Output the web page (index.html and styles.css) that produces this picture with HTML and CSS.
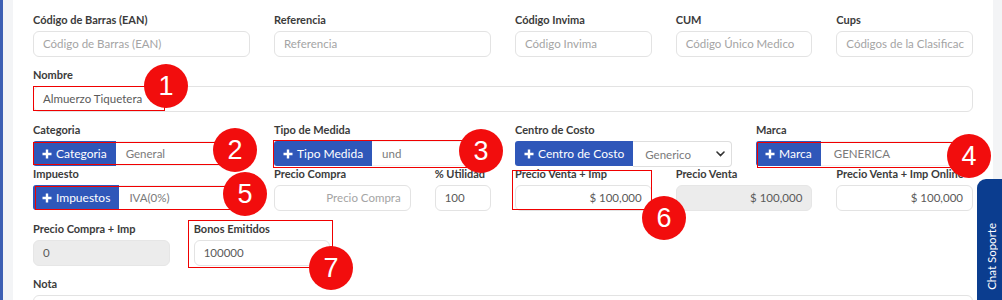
FILE: index.html
```html
<!DOCTYPE html>
<html lang="es">
<head>
<meta charset="utf-8">
<link rel="stylesheet" href="styles.css">
</head>
<body>
<div class="page">
  <div class="card">
    <div class="grid">
      <div class="field c3"><div class="lbl">Código de Barras (EAN)</div><div class="inp ph">Código de Barras (EAN)</div></div>
      <div class="field c3"><div class="lbl">Referencia</div><div class="inp ph">Referencia</div></div>
      <div class="field c2"><div class="lbl">Código Invima</div><div class="inp ph">Código Invima</div></div>
      <div class="field c2"><div class="lbl">CUM</div><div class="inp ph">Código Único Medico</div></div>
      <div class="field c2"><div class="lbl">Cups</div><div class="inp ph">Códigos de la Clasificac</div></div>

      <div class="field c12"><div class="lbl">Nombre</div><div class="inp val">Almuerzo Tiquetera</div></div>

      <div class="field c3 tight"><div class="lbl">Categoria</div>
        <div class="group"><div class="btn"><svg class="plus" width="10" height="10" viewBox="0 0 10 10"><path d="M5 0.5v9M0.5 5h9" stroke="#fff" stroke-width="2.4"/></svg>Categoria</div><div class="gin">General</div></div></div>
      <div class="field c3 tight"><div class="lbl">Tipo de Medida</div>
        <div class="group"><div class="btn"><svg class="plus" width="10" height="10" viewBox="0 0 10 10"><path d="M5 0.5v9M0.5 5h9" stroke="#fff" stroke-width="2.4"/></svg>Tipo Medida</div><div class="gin">und</div></div></div>
      <div class="field c3 tight"><div class="lbl">Centro de Costo</div>
        <div class="group"><div class="btn"><svg class="plus" width="10" height="10" viewBox="0 0 10 10"><path d="M5 0.5v9M0.5 5h9" stroke="#fff" stroke-width="2.4"/></svg>Centro de Costo</div><div class="gin sel">Generico<svg class="chev" width="9" height="6" viewBox="0 0 9 6"><path d="M1 1l3.5 3.5L8 1" fill="none" stroke="#333" stroke-width="1.6" stroke-linecap="round"/></svg></div></div></div>
      <div class="field c3 tight"><div class="lbl">Marca</div>
        <div class="group"><div class="btn"><svg class="plus" width="10" height="10" viewBox="0 0 10 10"><path d="M5 0.5v9M0.5 5h9" stroke="#fff" stroke-width="2.4"/></svg>Marca</div><div class="gin caps">GENERICA</div></div></div>

      <div class="field c3"><div class="lbl">Impuesto</div>
        <div class="group"><div class="btn"><svg class="plus" width="10" height="10" viewBox="0 0 10 10"><path d="M5 0.5v9M0.5 5h9" stroke="#fff" stroke-width="2.4"/></svg>Impuestos</div><div class="gin">IVA(0%)</div></div></div>
      <div class="field c2"><div class="lbl">Precio Compra</div><div class="inp ph right">Precio Compra</div></div>
      <div class="field c1"><div class="lbl">% Utilidad</div><div class="inp val">100</div></div>
      <div class="field c2"><div class="lbl">Precio Venta + Imp</div><div class="inp val right">$ 100,000</div></div>
      <div class="field c2"><div class="lbl">Precio Venta</div><div class="inp val right dis">$ 100,000</div></div>
      <div class="field c2"><div class="lbl">Precio Venta + Imp Online</div><div class="inp val right">$ 100,000</div></div>

      <div class="field c2"><div class="lbl">Precio Compra + Imp</div><div class="inp val dis">0</div></div>
      <div class="field c2"><div class="lbl">Bonos Emitidos</div><div class="inp val">100000</div></div>
      <div class="field c8"></div>

      <div class="field c12"><div class="lbl">Nota</div><div class="inp"></div></div>
    </div>
  </div>

  <div class="chat"><span>Chat Soporte</span></div>

  <div class="box b1"></div>
  <div class="box b2"></div>
  <div class="box b3"></div>
  <div class="box b4"></div>
  <div class="box b5"></div>
  <div class="box b6"></div>
  <div class="box b7"></div>

  <div class="num n1">1</div>
  <div class="num n2">2</div>
  <div class="num n3">3</div>
  <div class="num n4">4</div>
  <div class="num n5">5</div>
  <div class="num n6">6</div>
  <div class="num n7">7</div>
</div>
</body>
</html>
```

FILE: styles.css
```css
* { box-sizing: border-box; }
html, body { margin: 0; padding: 0; }
body {
  width: 1002px;
  height: 300px;
  overflow: hidden;
  font-family: "Lato", "Open Sans", sans-serif;
  background: #f3f4f6;
}
.page {
  position: relative;
  width: 1002px;
  height: 300px;
  border-left: 3px solid #3d5fb3;
  padding: 0 9px 0 10px;
  overflow: hidden;
}
.card {
  background: #ffffff;
  height: 300px;
  padding: 13px 20px 0 20px;
}
.grid {
  display: grid;
  grid-template-columns: repeat(12, 1fr);
  column-gap: 24px;
}
.c1 { grid-column: span 1; }
.c2 { grid-column: span 2; }
.c3 { grid-column: span 3; }
.c8 { grid-column: span 8; }
.c12 { grid-column: span 12; }
.field { margin-bottom: 11px; min-width: 0; }
.field.tight { margin-bottom: 1px; }
.lbl {
  font-size: 11px;
  line-height: 14px;
  font-weight: 700;
  color: #3b3b3b;
  margin-bottom: 4px;
  white-space: nowrap;
}
.inp {
  height: 26px;
  border: 1px solid #e3e3e3;
  border-radius: 6px;
  padding: 0 9px;
  font-size: 11.5px;
  line-height: 24px;
  white-space: nowrap;
  overflow: hidden;
  background: #fff;
}
.ph { color: #a4a4a4; }
.val { color: #5a5a5a; }
.right { text-align: right; }
.dis { background: #ececec; border-color: #e6e6e6; }
.group {
  display: flex;
  height: 25px;
}
.btn {
  background: #2f57b9;
  color: #fff;
  font-size: 12px;
  line-height: 25px;
  padding: 0 9px 0 9px;
  border-radius: 3px 0 0 3px;
  white-space: nowrap;
  display: flex;
  align-items: center;
}
.plus {
  flex: none;
  margin-right: 4px;
}
.gin {
  flex: 1;
  min-width: 0;
  border: 1px solid #f1f1f1;
  border-left: none;
  border-radius: 0 4px 4px 0;
  padding: 0 10px;
  font-size: 11.5px;
  line-height: 23px;
  color: #7a7a7a;
  white-space: nowrap;
  overflow: hidden;
}
.gin.sel {
  border-color: #dedede;
  border-left: none;
  display: flex;
  align-items: center;
  justify-content: space-between;
  padding: 0 6px 0 12px;
  height: 26px;
}
.gin.caps { padding-left: 13px; }
.chev { flex: none; }

.chat {
  position: absolute;
  left: 974px;
  top: 179px;
  width: 28px;
  height: 121px;
  background: #0b3d8f;
  border-radius: 9px 0 0 0;
  display: flex;
  align-items: flex-end;
  justify-content: center;
  padding-bottom: 10px;
}
.chat span {
  writing-mode: vertical-rl;
  transform: rotate(180deg);
  color: #fff;
  font-size: 11.5px;
  font-family: "Lato", sans-serif;
  white-space: nowrap;
}

.box {
  position: absolute;
  border: 1px solid #f00000;
}
.b1 { left: 30px; top: 86px; width: 132px; height: 25px; }
.b2 { left: 30px; top: 142px; width: 186px; height: 23px; }
.b3 { left: 270px; top: 140px; width: 200px; height: 28px; }
.b4 { left: 754px; top: 142px; width: 196px; height: 26px; }
.b5 { left: 32px; top: 186px; width: 202px; height: 24px; }
.b6 { left: 509px; top: 170px; width: 140px; height: 40px; }
.b7 { left: 185px; top: 220px; width: 145px; height: 48px; }

.num {
  position: absolute;
  width: 44px;
  height: 44px;
  border-radius: 50%;
  background: #f20d0d;
  color: #fff;
  font-family: "Liberation Sans", Arial, sans-serif;
  font-size: 27px;
  line-height: 44px;
  text-align: center;
}
.n1 { left: 141px; top: 64px; }
.n2 { left: 210px; top: 128px; }
.n3 { left: 456px; top: 129px; }
.n4 { left: 944px; top: 134px; }
.n5 { left: 220px; top: 172px; }
.n6 { left: 639px; top: 196px; }
.n7 { left: 306px; top: 246px; }
```
